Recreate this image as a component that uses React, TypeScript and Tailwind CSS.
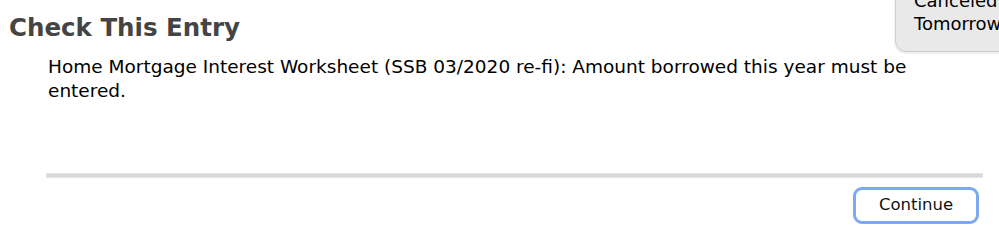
export default function App() {
  const font = { fontFamily: '"DejaVu Sans", Verdana, sans-serif' };
  return (
    <div className="relative h-[250px] w-[999px] overflow-hidden bg-white" style={font}>
      {/* notification toast in the corner */}
      <div className="absolute left-[895px] top-[-20px] h-[72px] w-[140px] rounded-[11px] border border-[#cfcfcf] bg-[#e9e9e9] pl-[18px] pt-[8px] text-[18px] leading-[23px] text-black shadow-[0_1px_3px_rgba(0,0,0,0.12)]">
        <div>Canceled</div>
        <div>Tomorrow</div>
      </div>

      <h1 className="pl-[9px] pt-[12px] text-[24.5px] font-bold leading-[32px] text-[#444]">Check This Entry</h1>

      <p className="ml-[48px] mt-[11px] w-[880px] text-[18.5px] leading-[24px] text-black">
        Home Mortgage Interest Worksheet (SSB 03/2020 re-fi): Amount borrowed this year must be entered.
      </p>

      <div className="ml-[46px] mt-[70px] h-[5px] w-[937px] border border-[#e4e4e4] bg-[#d9d9d9]" />

      <div className="flex justify-end pr-[20px] pt-[9px]">
        <button className="h-[37px] w-[126px] rounded-[9px] border-[3px] border-[#7ba9f2] bg-white text-[16.5px] text-[#111]">
          Continue
        </button>
      </div>
    </div>
  );
}
